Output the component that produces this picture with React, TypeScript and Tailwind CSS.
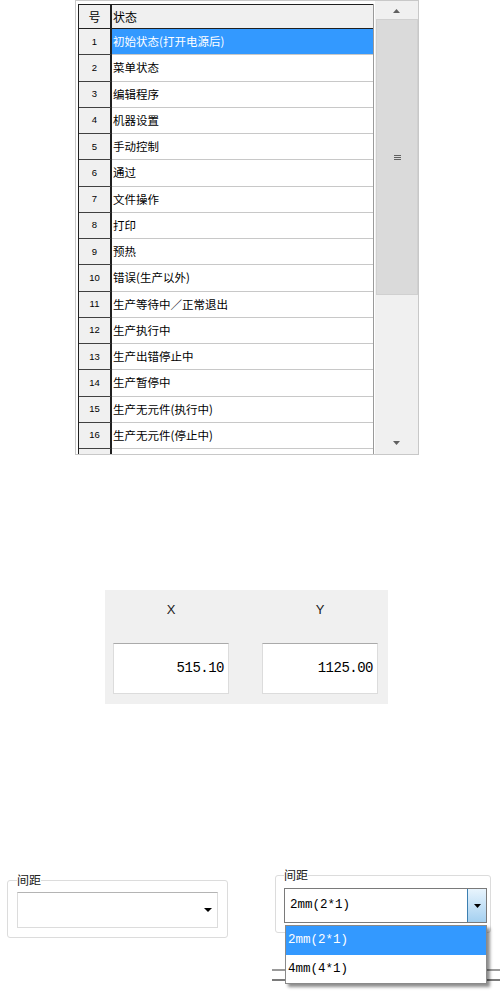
const rows = [
  '初始状态(打开电源后)',
  '菜单状态',
  '编辑程序',
  '机器设置',
  '手动控制',
  '通过',
  '文件操作',
  '打印',
  '预热',
  '错误(生产以外)',
  '生产等待中／正常退出',
  '生产执行中',
  '生产出错停止中',
  '生产暂停中',
  '生产无元件(执行中)',
  '生产无元件(停止中)',
  '',
]

function TriUp() {
  return (
    <svg width="7" height="4" viewBox="0 0 7 4">
      <polygon points="3.5,0 7,4 0,4" fill="#606060" />
    </svg>
  )
}

function TriDown({ color = '#606060', w = 7, h = 4 }: { color?: string; w?: number; h?: number }) {
  return (
    <svg width={w} height={h} viewBox={`0 0 ${w} ${h}`}>
      <polygon points={`0,0 ${w},0 ${w / 2},${h}`} fill={color} />
    </svg>
  )
}

function StateTable() {
  return (
    <div className="ml-[75px] flex h-[455px] w-[344px] border border-[#c8c8c8] bg-white">
      {/* ── grid ── */}
      <div className="h-full overflow-hidden pl-[2px] pt-[3px]">
        <div className="w-[296px] border-l border-r border-l-[#202020] border-r-[#9a9a9a] font-['Noto_Sans_CJK_SC',sans-serif] text-[11.5px] text-black">
          <div className="flex h-[25px] border-y border-[#202020] bg-[#f0f0f0]">
            <div className="flex w-[33px] items-center justify-center border-r-2 border-[#202020] text-[12px]">号</div>
            <div className="flex flex-1 items-center pl-[1px] text-[12px]">状态</div>
          </div>
          {rows.map((r, i) => (
            <div key={i} className="flex h-[26.25px]">
              <div className="flex w-[33px] items-center justify-center border-b border-r-2 border-b-[#404040] border-r-[#202020] bg-[#f0f0f0] font-['Liberation_Sans',sans-serif] text-[9.5px]">
                {r ? i + 1 : ''}
              </div>
              <div
                className={`flex flex-1 items-center border-b border-[#c8c8c8] pl-[1px] ${
                  i === 0 ? 'bg-[#3399ff] text-white' : 'bg-white'
                }`}
              >
                {r}
              </div>
            </div>
          ))}
        </div>
      </div>

      {/* ── scrollbar ── */}
      <div className="ml-[1px] flex w-[43px] flex-col bg-[#f0f0f0]">
        <div className="flex h-[18px] items-center justify-center pt-[2px]">
          <TriUp />
        </div>
        <div className="ml-[1px] flex h-[276px] items-center justify-center border border-[#d0d0d0] bg-[#dadada]">
          <div className="flex flex-col gap-[1px]">
            <div className="h-[1px] w-[7px] bg-[#606060]" />
            <div className="h-[1px] w-[7px] bg-[#606060]" />
            <div className="h-[1px] w-[7px] bg-[#606060]" />
          </div>
        </div>
        <div className="flex-1" />
        <div className="flex h-[18px] items-center justify-center pb-[4px]">
          <TriDown />
        </div>
      </div>
    </div>
  )
}

function CoordPanel() {
  return (
    <div className="ml-[105px] mt-[135px] h-[114px] w-[283px] bg-[#f0f0f0] pl-[8px] pt-[12px]">
      <div className="grid grid-cols-[116px_116px] gap-x-[33px]">
        <div className="text-center font-['Liberation_Sans',sans-serif] text-[13px] leading-[16px] text-[#202020]">X</div>
        <div className="text-center font-['Liberation_Sans',sans-serif] text-[13px] leading-[16px] text-[#202020]">Y</div>
        {['515.10', '1125.00'].map(v => (
          <div
            key={v}
            className="mt-[25px] flex h-[51px] items-center justify-end border border-[#dcdcdc] border-t-[#aaaaaa] bg-white pr-[4px] font-['Liberation_Mono',monospace] text-[14px] tracking-[-0.5px] text-black"
          >
            {v}
          </div>
        ))}
      </div>
    </div>
  )
}

function Spacing() {
  return (
    <div className="mt-[164px] flex items-start">
      {/* left, closed */}
      <div className="ml-[7px] mt-[5px]">
        <fieldset className="w-[221px] rounded-[3px] border border-[#dcdcdc] pb-[9px] pl-[9px] pr-[9px]">
          <legend className="font-['Noto_Sans_CJK_SC',sans-serif] text-[12px] leading-[14px] text-[#202020]">间距</legend>
          <div className="mt-[5px] flex h-[36px] items-center justify-end border border-[#dcdcdc] border-t-[#b4b4b4] bg-white pr-[5px]">
            <TriDown color="#000" w={8} h={4} />
          </div>
        </fieldset>
      </div>

      {/* right, open */}
      <div className="ml-[44px] w-[228px]">
        <fieldset className="ml-[3px] w-[216px] rounded-[3px] border border-[#dcdcdc] pb-[9px] pl-[8px] pr-[3px]">
          <legend className="font-['Noto_Sans_CJK_SC',sans-serif] text-[12px] leading-[14px] text-[#202020]">间距</legend>
          <div className="relative mt-[6px]">
            <div className="flex h-[35px] items-stretch border border-[#7a7a7a] bg-white">
              <div className="flex flex-1 items-center pl-[5px] font-['Liberation_Mono',monospace] text-[12.5px] text-black">
                2mm(2*1)
              </div>
              <div className="flex w-[19px] items-center justify-center border-l border-[#3c7fb1] bg-gradient-to-b from-[#e8f4fd] to-[#a4d0f0]">
                <TriDown color="#000" w={7} h={4} />
              </div>
            </div>
            <div className="absolute left-[1px] top-full z-10 mt-[2px] w-[202px] border border-[#8a8a8a] bg-white font-['Liberation_Mono',monospace] text-[12.5px] shadow-[3px_3px_3px_rgba(0,0,0,0.45)]">
              <div className="flex h-[29px] items-center bg-[#3399ff] pl-[2px] text-white">2mm(2*1)</div>
              <div className="flex h-[28px] items-center pl-[2px] text-black">4mm(4*1)</div>
            </div>
          </div>
        </fieldset>
        <div className="mt-[36px] h-[2px] bg-[#9a9a9a]" />
        <div className="mt-[8px] h-[2px] bg-[#7a7a7a]" />
      </div>
    </div>
  )
}

export default function App() {
  return (
    <div className="h-[991px] w-[500px] overflow-hidden bg-white">
      <StateTable />
      <CoordPanel />
      <Spacing />
    </div>
  )
}
